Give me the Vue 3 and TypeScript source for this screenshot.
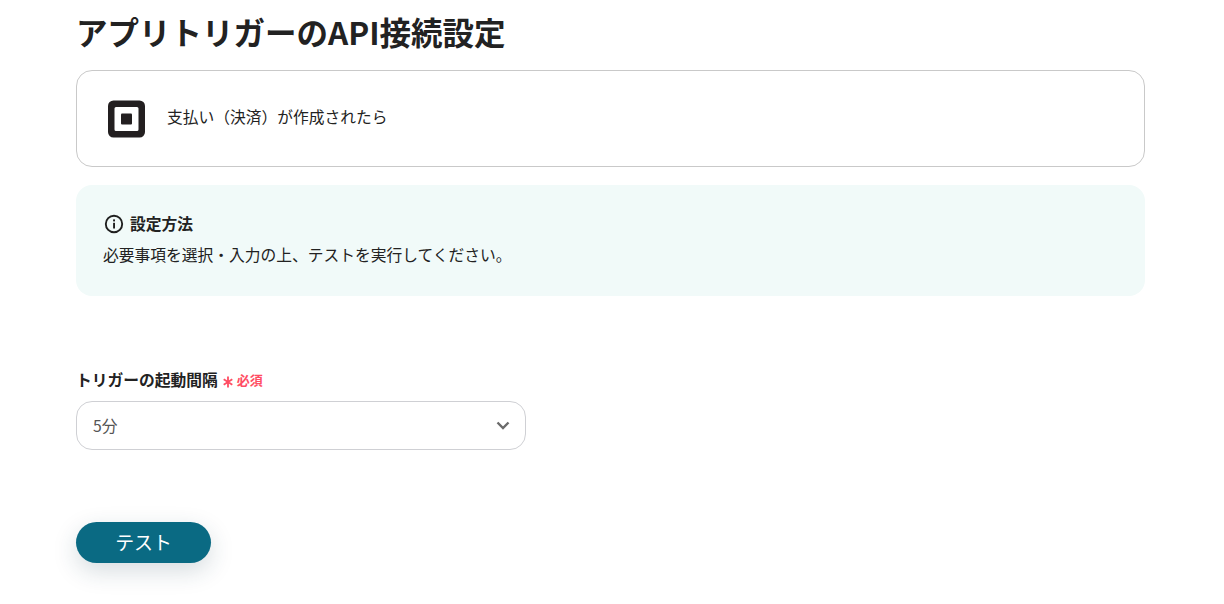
<template>
  <div class="page">
    <h1 class="title">アプリトリガーのAPI接続設定</h1>

    <div class="app-card">
      <svg class="logo" width="38" height="38" viewBox="0 0 38 38">
        <path fill-rule="evenodd" fill="#231f20" d="M5.500 0.500h26a5.500 5.500 0 0 1 5.500 5.500v26a5.500 5.500 0 0 1-5.500 5.500h-26a5.500 5.500 0 0 1-5.500-5.500v-26a5.500 5.500 0 0 1 5.500-5.500zM8 7a1.500 1.500 0 0 0-1.500 1.500v21a1.500 1.500 0 0 0 1.500 1.500h21a1.500 1.500 0 0 0 1.500-1.500v-21a1.500 1.500 0 0 0-1.500-1.500z" />
        <rect x="13" y="13.500" width="11" height="11" rx="1" fill="#231f20" />
      </svg>
      <span class="app-text">{{ triggerName }}</span>
    </div>

    <div class="notice">
      <div class="notice-head">
        <svg width="20" height="20" viewBox="0 0 20 20" fill="none">
          <circle cx="10" cy="10" r="8.200" stroke="#1f1f1f" stroke-width="1.900" />
          <rect x="9.100" y="8.800" width="1.900" height="5.700" fill="#1f1f1f" />
          <rect x="9.100" y="5.400" width="1.900" height="2" fill="#1f1f1f" />
        </svg>
        <span>設定方法</span>
      </div>
      <p class="notice-text">必要事項を選択・入力の上、テストを実行してください。</p>
    </div>

    <div class="field">
      <div class="label">
        <span>トリガーの起動間隔</span>
        <span class="required">
          <svg class="mark" width="10" height="12" viewBox="0 0 10 12" fill="none">
            <path d="M5 0.500v11M0.700 3.200l8.600 5.600M9.300 3.200l-8.600 5.600" stroke="#ff4d63" stroke-width="1.800" />
          </svg>
          必須
        </span>
      </div>
      <div class="select">
        <span>{{ interval }}</span>
        <svg width="14" height="9" viewBox="0 0 14 9" fill="none">
          <path d="M1.500 1.500L7 7l5.500-5.500" stroke="#6b6b6b" stroke-width="2.400" />
        </svg>
      </div>
    </div>

    <button class="test-button">テスト</button>
  </div>
</template>

<script setup lang="ts">
import { ref } from 'vue'

const triggerName = ref('支払い（決済）が作成されたら')
const interval = ref('5分')
</script>

<style>
html, body {
  margin: 0;
  background: #fff;
}
</style>

<style scoped>
.page {
  width: 1069px;
  min-height: 604px;
  margin-left: 76px;
  display: flex;
  flex-direction: column;
  align-items: flex-start;
  color: #222;
  font-family: "Noto Sans CJK JP", "Noto Sans", sans-serif;
}

.title {
  margin: 10px 0 0;
  font-size: 31.500px;
  line-height: 42px;
  font-weight: 700;
  height: 60px;
}

.app-card {
  box-sizing: border-box;
  width: 100%;
  height: 97px;
  border: 1px solid #c9c9c9;
  border-radius: 16px;
  padding: 0 0 0 31px;
  display: flex;
  align-items: center;
  gap: 21px;
}

.app-text {
  font-size: 15.750px;
  line-height: 22px;
  margin-top: -4px;
}

.notice {
  box-sizing: border-box;
  width: 100%;
  height: 111px;
  margin-top: 18px;
  padding: 28px 27px 0;
  border-radius: 16px;
  background: #f1faf9;
}

.notice-head {
  display: flex;
  align-items: center;
  gap: 6px;
  margin-left: 1px;
  height: 22px;
  font-size: 15.750px;
  line-height: 20px;
  font-weight: 700;
}

.notice-text {
  margin: 9px 0 0;
  font-size: 15.750px;
  line-height: 22px;
}

.field {
  width: 450px;
  margin-top: 73px;
}

.label {
  display: flex;
  align-items: center;
  height: 20px;
  font-size: 15.750px;
  font-weight: 700;
}

.required {
  margin-left: 5px;
  color: #ff4d63;
  font-size: 13px;
  display: flex;
  align-items: center;
  gap: 4px;
}

.mark {
  margin-top: 5px;
}

.select {
  box-sizing: border-box;
  height: 49px;
  margin-top: 12px;
  padding: 0 15px 0 16px;
  border: 1px solid #cfd0d4;
  border-radius: 16px;
  display: flex;
  align-items: center;
  justify-content: space-between;
  color: #555;
  font-size: 15.750px;
}

.test-button {
  width: 135px;
  height: 41px;
  margin-top: 72px;
  padding: 0 0 3px;
  border: 0;
  border-radius: 21px;
  background: #0a6a83;
  color: #fff;
  font-family: inherit;
  font-size: 18.900px;
  box-shadow: 0 8px 24px rgba(30, 60, 80, 0.18);
}
</style>
